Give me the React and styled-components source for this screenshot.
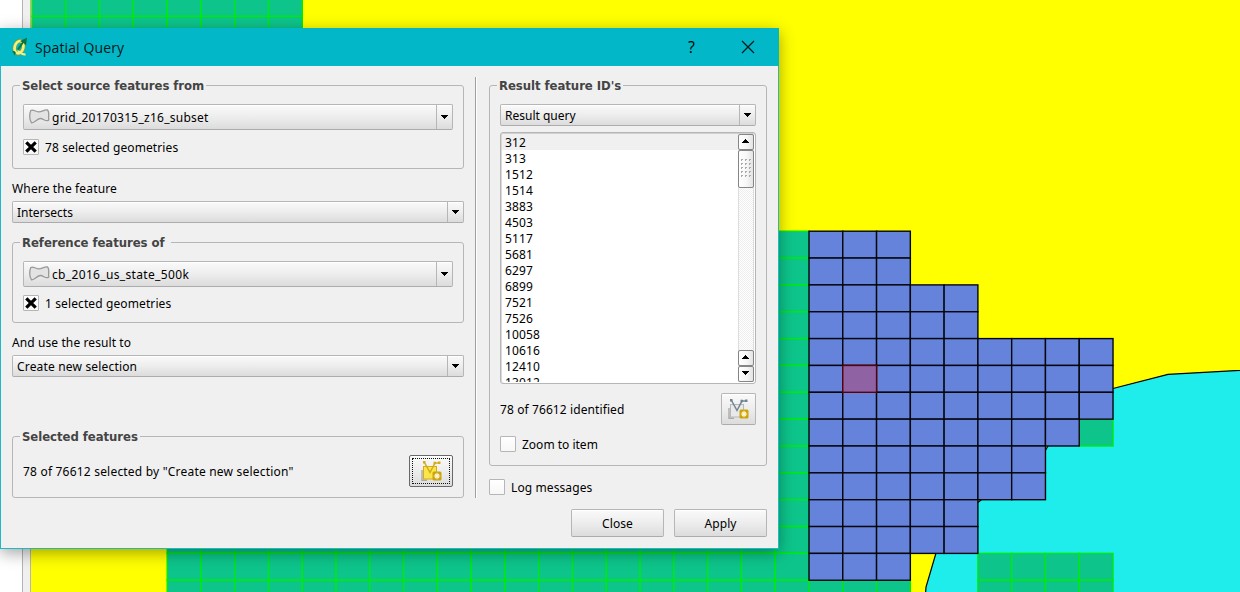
import React from 'react';
import styled, { createGlobalStyle, css } from 'styled-components';

const GlobalStyle = createGlobalStyle`
  * { box-sizing: border-box; }
  body { margin: 0; overflow: hidden; background: #fff; }
`;

const Screen = styled.main`
  position: relative;
  width: 1240px;
  height: 592px;
  overflow: hidden;
  display: flex;
  font-family: 'Noto Sans', 'DejaVu Sans', sans-serif;
  font-size: 12px;
  color: #000;
`;

const SidePanel = styled.div`
  width: 22px;
  background: #fff;
`;

const Splitter = styled.div`
  width: 9px;
  background: #f0f0f0;
  border-left: 1px solid #b4b4b4;
  border-right: 1px solid #b4b4b4;
`;

const MapSvg = styled.svg`
  display: block;
  width: 1209px;
  height: 592px;
`;

const Dialog = styled.section`
  position: absolute;
  left: 0;
  top: 28px;
  width: 779px;
  height: 521px;
  background: #f0f0f0;
  border: 1px solid #1cb9c8;
  border-top: 0;
  box-shadow: 0 4px 15px rgba(0, 0, 0, 0.36);
  display: flex;
  flex-direction: column;
`;

const TitleBar = styled.header`
  flex: 0 0 38px;
  margin: 0 -1px;
  background: #02b7c7;
  display: flex;
  align-items: center;
  padding: 0 24px 0 11px;
`;

const Title = styled.h1`
  flex: 1;
  margin: 0 0 0 7px;
  padding-top: 2px;
  font: 400 14px/20px 'Open Sans', sans-serif;
  letter-spacing: 0.12px;
  color: #04181a;
`;

const HelpButton = styled.span`
  font: 400 16px/20px 'Open Sans', sans-serif;
  margin-right: 46px;
  color: #000;
`;

const Body = styled.div`
  flex: 1;
  display: flex;
  padding: 0 11px;
`;

const LeftColumn = styled.div`
  width: 452px;
  padding-top: 19px;
`;

const Divider = styled.div`
  width: 2px;
  height: 421px;
  margin: 11px 12px 0 11px;
  border-left: 1px solid #9e9e9e;
  border-right: 1px solid #fff;
`;

const RightColumn = styled.div`
  width: 278px;
  padding-top: 19px;
`;

const Group = styled.section`
  height: ${(p) => p.$height}px;
  margin-top: ${(p) => p.$gap || 0}px;
  border: 1px solid #b6b6b6;
  border-radius: 3px;
  padding: 0 10px;
`;

const GroupTitle = styled.h2`
  width: max-content;
  height: 18px;
  margin: -10px 0 0 -3px;
  padding: 0 ${(p) => p.$pad || 2}px 0 2px;
  background: #f0f0f0;
  font-family: 'DejaVu Sans Condensed', 'DejaVu Sans', sans-serif;
  font-stretch: condensed;
  font-size: 13px;
  line-height: 20px;
  font-weight: 700;
  white-space: nowrap;
  letter-spacing: -0.05px;
  color: #444;
`;

const Text = styled.span`
  padding-top: 2px;
  line-height: 18px;
  white-space: nowrap;
  letter-spacing: ${(p) => p.$track || 0}px;
`;

const FieldLabel = styled.label`
  display: block;
  height: 18px;
  margin-top: ${(p) => p.$gap}px;
  line-height: 20px;
  letter-spacing: ${(p) => p.$track || 0}px;
`;

const raised = css`
  background: linear-gradient(#fafafa, #ededed 50%, #dcdcdc);
  border: 1px solid #b6b6b6;
  border-bottom-color: #acacac;
  border-radius: 2px;
  box-shadow: inset 0 1px 0 #fff;
`;

const ComboBox = styled.div`
  ${raised}
  display: flex;
  align-items: center;
  height: ${(p) => p.$height}px;
  margin-top: ${(p) => p.$gap}px;
  padding-left: 4px;
`;

const ComboArrow = styled.span`
  width: 16px;
  align-self: stretch;
  margin-left: auto;
  border-left: 1px solid #b6b6b6;
  display: flex;
  align-items: center;
  justify-content: center;
`;

const CheckRow = styled.div`
  display: flex;
  align-items: center;
  gap: 6px;
  height: 16px;
  margin-top: ${(p) => p.$gap}px;
`;

const CheckBox = styled.span`
  display: flex;
  align-items: center;
  justify-content: center;
  width: 16px;
  height: 16px;
  background: linear-gradient(#fff, #f7f7f7);
  border: 1px solid #b6b6b6;
  border-radius: 1px;
`;

const IconRow = styled.div`
  display: flex;
  align-items: center;
  justify-content: space-between;
  height: 32px;
  margin-top: ${(p) => p.$gap}px;
`;

const IconButton = styled.button`
  ${raised}
  width: ${(p) => p.$width}px;
  height: 32px;
  padding: 0 0 1px;
  display: flex;
  align-items: center;
  justify-content: center;
  ${(p) => p.$focused && css`border: 1px solid #686868; outline: 1px dotted #111; outline-offset: -4px;`}
`;

const List = styled.div`
  display: flex;
  height: 252px;
  margin-top: 6px;
  border: 1px solid #b6b6b6;
  border-radius: 3px;
  padding: 1px;
  background: #fff;
  box-shadow: inset 0 1px 0 #d0d0d0, inset 1px 0 0 #d8d8d8;
`;

const Rows = styled.div`
  flex: 1;
  overflow: hidden;
`;

const Row = styled.div`
  height: 16px;
  padding-left: 3px;
  line-height: 18px;
  letter-spacing: 0.12px;
  background: ${(p) => (p.$current ? '#f0f0f0' : 'transparent')};
`;

const ScrollBar = styled.div`
  width: 16px;
  height: 248px;
  display: flex;
  flex-direction: column;
  background: repeating-conic-gradient(#fff 0 25%, #eee 0 50%) 0 0 / 2px 2px;
  box-shadow: inset 1px 0 0 #ddd, inset -1px 0 0 #ddd;
`;

const ScrollPart = styled.div`
  height: ${(p) => p.$height || 16}px;
  display: flex;
  align-items: center;
  justify-content: center;
  padding: 0 1px 2px 0;
  background: linear-gradient(90deg, #fff, #f6f6f6 55%, #e4e4e4);
  border: 1px solid #858585;
  border-radius: 2px;
  ${(p) => p.$push && css`margin-top: auto;`}
`;

const Actions = styled.div`
  display: flex;
  justify-content: flex-end;
  gap: 10px;
  margin-top: 14px;
`;

const PushButton = styled.button`
  ${raised}
  width: 93px;
  height: 28px;
  padding: 2px 0 0;
  font: 12px/18px 'Noto Sans', sans-serif;
  letter-spacing: 0.1px;
  color: #000;
`;

const PX = 33.78;
const PY = 26.85;
const X0 = 809;
const Y0 = 231.2;
const selectedRows = [3, 3, 5, 5, 9, 9, 9, 8, 7, 7, 5, 5, 3];
const gx = (c) => X0 + c * PX;
const gy = (r) => Y0 + r * PY;

function Cells({ fromCol, toCol, fromRow, toRow, fill, stroke }) {
  const cells = [];
  for (let r = fromRow; r < toRow; r++) {
    for (let c = fromCol; c < toCol; c++) {
      cells.push(
        <rect key={`${r}.${c}`} x={gx(c)} y={gy(r)} width={PX} height={PY} fill={fill} stroke={stroke} strokeWidth="1.4" />
      );
    }
  }
  return <g>{cells}</g>;
}

const green = { fill: '#0dc58b', stroke: '#00ea10' };
const blue = { fill: '#6583db', stroke: '#05070d' };

function MapCanvas() {
  return (
    <MapSvg viewBox="31 0 1209 592">
      <rect x="31" width="1209" height="592" fill="#ffff00" />
      <path d="M1240 370.3 L1168 374.3 L1113 388.5 L1060 430 L1048 446 L1045 451 L981 500 L976 504 L936 553 L926 587 L925.5 594 H1242 V370Z" fill="#1fedec" stroke="#000" strokeWidth="1.2" />
      <Cells fromCol={-23} toCol={-15} fromRow={-9} toRow={-7} {...green} />
      <Cells fromCol={-2} toCol={0} fromRow={0} toRow={12} {...green} />
      <Cells fromCol={-19} toCol={0} fromRow={11} toRow={14} {...green} />
      <Cells fromCol={0} toCol={3} fromRow={13} toRow={14} {...green} />
      <Cells fromCol={5} toCol={9} fromRow={12} toRow={14} {...green} />
      <Cells fromCol={8} toCol={9} fromRow={7} toRow={8} {...green} />
      {selectedRows.map((n, r) => (
        <Cells key={r} fromCol={0} toCol={n} fromRow={r} toRow={r + 1} {...blue} />
      ))}
      <Cells fromCol={1} toCol={2} fromRow={5} toRow={6} fill="#8f62a3" stroke="#5c0008" />
    </MapSvg>
  );
}

function Arrow({ up }) {
  return (
    <svg width="7" height="4" viewBox="0 0 7 4" shapeRendering="crispEdges">
      <path d={up ? 'M3 0h1v1h1v1h1v1h1v1H0V3h1V2h1V1h1z' : 'M0 0h7v1H6v1H5v1H4v1H3V3H2V2H1V1H0z'} />
    </svg>
  );
}

const PolygonSvg = styled.svg`
  flex: none;
  margin-right: 2px;
`;

function PolygonIcon() {
  return (
    <PolygonSvg width="22" height="18" viewBox="0 0 22 18">
      <path d="M2.800 2.500C5 1 7 3.500 10.500 3.800C14 4 16 1.500 19.500 2C22 4 20 8 20.800 12C18 14.500 15.500 10.500 12.500 10.500C9 10.500 6.500 15.500 3.500 14.800C1 12 1.500 5 2.800 2.500Z" fill="#e3e3e3" stroke="#969996" strokeWidth="1.300" />
    </PolygonSvg>
  );
}

function QgisIcon() {
  return (
    <svg width="17" height="20" viewBox="0 0 17 20">
      <ellipse cx="8" cy="10.200" rx="4.300" ry="6.300" transform="rotate(14 8 10.200)" fill="none" stroke="#8f9a2b" strokeWidth="3.800" />
      <ellipse cx="8" cy="10.200" rx="4.300" ry="6.300" transform="rotate(14 8 10.200)" fill="none" stroke="#f4f07a" strokeWidth="2.700" />
      <path d="M6.500 14.500C9 14 10.500 18.500 14.500 17.200" fill="none" stroke="#f4f07a" strokeWidth="2.200" />
      <path d="M7 12.500L12.500 4.500" stroke="#087a3d" strokeWidth="2" />
      <path d="M9 4L16 .8L15 8.200L12.500 6Z" fill="#08733b" />
      <path d="M1 14.500L3.500 14L5 16L3 18.500L2.800 16.300Z" fill="#08733b" />
    </svg>
  );
}

function SelectionIcon({ active }) {
  const line = active ? '#d3ad18' : '#6d8696';
  return (
    <svg width="21" height="21" viewBox="0 0 21 21">
      <path d="M1 10V20.300H6" fill="none" stroke="#aaa" strokeWidth="1.400" />
      <rect x="2.500" y="6.500" width="13" height="12.500" fill={active ? '#f9e64a' : '#e9e9e9'} stroke={active ? '#d6ac1c' : '#b8b8b8'} />
      <path d="M3.500 2.500L9 12.500L14 3H18" fill="none" stroke={line} strokeWidth="1.500" />
      <path d="M2 1h2.500v2.500H2zM12.500 1.800h2.500v2.500h-2.500zM17 1.500h2.500v2.500H17z" fill={line} />
      <rect x="11.500" y="11.500" width="9" height="9" rx="1.500" fill="#cba40c" />
      <path d="M16 12.800v6.400M12.800 16h6.400M14 14l4 4M18 14l-4 4" stroke="#fff7d2" strokeWidth="1.100" />
    </svg>
  );
}

function Cross() {
  return (
    <svg width="12" height="12" viewBox="0 0 12 12">
      <path d="M1.300 1.300L10.700 10.700M10.700 1.300L1.300 10.700" stroke="#000" strokeWidth="3.200" />
    </svg>
  );
}

function Grip() {
  return (
    <svg width="12" height="20" viewBox="0 0 12 20" shapeRendering="crispEdges">
      {[1, 5, 9, 13, 17].map((y) => [1, 5, 9].map((x) => (
        <path key={`${x}.${y}`} d={`M${x} ${y}h2v1h-1v1h-1z`} fill="#aaa" />
      )))}
    </svg>
  );
}

function Combo({ label, height, gap, icon, track }) {
  return (
    <ComboBox $height={height} $gap={gap}>
      {icon && <PolygonIcon />}
      <Text $track={track}>{label}</Text>
      <ComboArrow><Arrow /></ComboArrow>
    </ComboBox>
  );
}

function Check({ label, gap, checked, track }) {
  return (
    <CheckRow $gap={gap}>
      <CheckBox>{checked && <Cross />}</CheckBox>
      <Text $track={track}>{label}</Text>
    </CheckRow>
  );
}

const ids = ['312', '313', '1512', '1514', '3883', '4503', '5117', '5681', '6297', '6899', '7521', '7526', '10058', '10616', '12410', '13012'];

export default function App() {
  return (
    <Screen>
      <GlobalStyle />
      <SidePanel />
      <Splitter />
      <MapCanvas />
      <Dialog>
        <TitleBar>
          <QgisIcon />
          <Title>Spatial Query</Title>
          <HelpButton>?</HelpButton>
          <svg width="14" height="14" viewBox="0 0 14 14">
            <path d="M1 1L13 13M13 1L1 13" stroke="#04181a" strokeWidth="1.200" />
          </svg>
        </TitleBar>
        <Body>
          <LeftColumn>
            <Group $height={84}>
              <GroupTitle>Select source features from</GroupTitle>
              <Combo label="grid_20170315_z16_subset" height={26} gap={10} icon track={0.26} />
              <Check label="78 selected geometries" gap={9} checked track={0.11} />
            </Group>
            <FieldLabel $gap={10} $track={0.15}>Where the feature</FieldLabel>
            <Combo label="Intersects" height={22} gap={4} />
            <Group $height={81} $gap={19}>
              <GroupTitle $pad={6}>Reference features of</GroupTitle>
              <Combo label="cb_2016_us_state_500k" height={26} gap={10} icon track={0.34} />
              <Check label="1 selected geometries" gap={8} checked track={0.11} />
            </Group>
            <FieldLabel $gap={10} $track={0.1}>And use the result to</FieldLabel>
            <Combo label="Create new selection" height={22} gap={4} track={0.17} />
            <Group $height={62} $gap={59}>
              <GroupTitle>Selected features</GroupTitle>
              <IconRow $gap={10}>
                <Text $track={0.2}>78 of 76612 selected by "Create new selection"</Text>
                <IconButton $width={44} $focused><SelectionIcon active /></IconButton>
              </IconRow>
            </Group>
          </LeftColumn>
          <Divider />
          <RightColumn>
            <Group $height={381}>
              <GroupTitle>Result feature ID's</GroupTitle>
              <Combo label="Result query" height={22} gap={10} />
              <List>
                <Rows>
                  {ids.map((id, i) => <Row key={id} $current={i === 0}>{id}</Row>)}
                </Rows>
                <ScrollBar>
                  <ScrollPart><Arrow up /></ScrollPart>
                  <ScrollPart $height={38}><Grip /></ScrollPart>
                  <ScrollPart $push><Arrow up /></ScrollPart>
                  <ScrollPart><Arrow /></ScrollPart>
                </ScrollBar>
              </List>
              <IconRow $gap={9}>
                <Text $track={0.1}>78 of 76612 identified</Text>
                <IconButton $width={35}><SelectionIcon /></IconButton>
              </IconRow>
              <Check label="Zoom to item" gap={11} />
            </Group>
            <Check label="Log messages" gap={13} track={0.1} />
            <Actions>
              <PushButton>Close</PushButton>
              <PushButton>Apply</PushButton>
            </Actions>
          </RightColumn>
        </Body>
      </Dialog>
    </Screen>
  );
}
